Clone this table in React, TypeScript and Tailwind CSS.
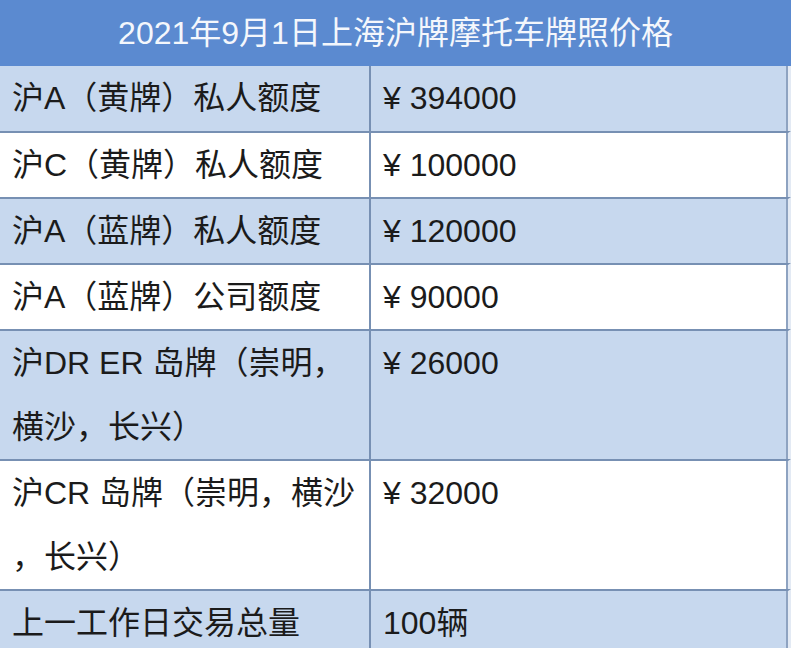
import React from "react";

interface PriceRow {
  label: string[];
  price: string;
}

const rows: PriceRow[] = [
  { label: ["沪A（黄牌）私人额度"], price: "¥ 394000" },
  { label: ["沪C（黄牌）私人额度"], price: "¥ 100000" },
  { label: ["沪A（蓝牌）私人额度"], price: "¥ 120000" },
  { label: ["沪A（蓝牌）公司额度"], price: "¥ 90000" },
  { label: ["沪DR ER 岛牌（崇明，", "横沙，长兴）"], price: "¥ 26000" },
  { label: ["沪CR 岛牌（崇明，横沙", "，长兴）"], price: "¥ 32000" },
  { label: ["上一工作日交易总量"], price: "100辆" },
];

export default function App() {
  return (
    <div
      className="w-[791px] h-[648px] overflow-hidden bg-white text-[#1b1b1b]"
      style={{ fontFamily: '"Liberation Sans", "Noto Sans CJK SC", sans-serif' }}
    >
      <div className="h-[66px] bg-[#5b8ad0] flex items-center justify-center text-[#f4f7fc] text-[32px]">
        2021年9月1日上海沪牌摩托车牌照价格
      </div>
      {rows.map((row, i) => (
        <div
          key={i}
          className={
            "flex text-[32px] leading-[64px] border-r-[3px] border-r-[#e3eaf4] " +
            (i === 0 ? "min-h-[65px] " : "border-t-2 border-t-[#7790b3] ") +
            (i % 2 === 0 ? "bg-[#c7d8ee]" : "bg-white")
          }
        >
          <div className="w-[371px] shrink-0 pl-[12px] border-r-2 border-r-[#7790b3] whitespace-nowrap">
            {row.label.map((line, j) => (
              <div key={j}>{line}</div>
            ))}
          </div>
          <div className="flex-1 pl-[12px] border-r-2 border-r-[#8ea3c1] whitespace-nowrap">
            {row.price}
          </div>
        </div>
      ))}
    </div>
  );
}
